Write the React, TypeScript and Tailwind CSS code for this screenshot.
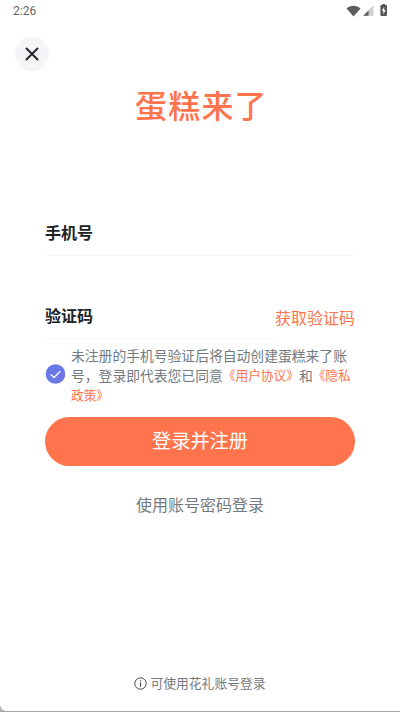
import React from "react";

function StatusBar() {
  return (
    <header className="flex h-6 items-start justify-between pl-[13px] pr-3 font-[Roboto,sans-serif] text-[#626262]">
      <span className="pt-[3px] text-[12px] leading-[17px]">2:26</span>
      <div className="flex items-start pt-[4px]">
        <svg className="mt-px h-3 w-[15px]" viewBox="0 0 15 12" fill="#5c5c5c">
          <path d="M0.5 3.4C4.5 -0.3 10.5 -0.3 14.5 3.4L7.5 11.6Z" />
        </svg>
        <svg className="ml-[2px] mt-px h-[11px] w-[11px]" viewBox="0 0 11 11">
          <path d="M10.3 0.5V10.7H0.2Z" fill="#cecece" />
          <path d="M5.5 5.4V10.7H0.2Z" fill="#5c5c5c" />
        </svg>
        <svg className="ml-[6px] h-3 w-[8px]" viewBox="0 0 8 12">
          <path d="M2.4 0H5V1H6.2Q7 1 7 1.8V11.2Q7 12 6.2 12H1.2Q.4 12 .4 11.2V1.8Q.4 1 1.2 1H2.4Z" fill="#555" />
          <path d="M4.2 2.8L1.8 7H3.3V10.2L5.7 5.9H4.2Z" fill="#fff" />
        </svg>
      </div>
    </header>
  );
}

export default function App() {
  return (
    <main className="relative flex h-[712px] w-[400px] flex-col overflow-hidden border-b border-[#a3a3a3] bg-white font-['Noto_Sans_CJK_SC','Noto_Sans',sans-serif] text-[#737a80]">
      <StatusBar />
      <button aria-label="关闭" className="ml-[15px] mt-[13px] flex h-[34px] w-[34px] shrink-0 items-center justify-center rounded-full bg-[#f4f5f7]">
        <svg className="h-[14px] w-[14px]" viewBox="0 0 14 14" fill="none" stroke="#202326" strokeWidth="1.9" strokeLinecap="round">
          <path d="M1.5 1.5L12.5 12.5M12.5 1.5L1.5 12.5" />
        </svg>
      </button>
      <h1 className="mt-[13px] h-[40px] whitespace-nowrap pl-[135px] text-[32px] font-medium leading-[40px] tracking-[1.2px] text-[#ff744c]">蛋糕来了</h1>

      <section className="mx-[45px] mt-[96px] flex flex-col">
        <div className="h-[36px] border-b border-[#f4f4f4] text-[16px] font-bold leading-[24px] text-[#202326]">手机号</div>
        <div className="mt-[47px] flex h-[36px] justify-between">
          <div className="flex-1 border-b border-[#f4f4f4] text-[16px] font-bold leading-[24px] text-[#202326]">验证码</div>
          <button className="h-[28px] w-[80px] whitespace-nowrap text-[16px] leading-[28px] text-[#ff744c]">获取验证码</button>
        </div>

        <div className="mt-[6px] flex h-[60px] items-start">
          <svg className="mt-[19px] h-5 w-5 shrink-0" viewBox="0 0 20 20">
            <circle cx="10.5" cy="10" r="9.8" fill="#6b78e8" />
            <path d="M5.7 10.4L9 13.5L15.3 7.2" fill="none" stroke="#fff" strokeWidth="1.3" />
          </svg>
          <div className="ml-[6px] whitespace-nowrap text-[13.8px] leading-[20px]">
            <div>未注册的手机号验证后将自动创建蛋糕来了账</div>
            <div className="flex">
              <span>号，登录即代表您已同意</span>
              <span className="text-[12.7px] text-[#ff744c]">《用户协议》</span>
              <span>和</span>
              <span className="text-[12.7px] text-[#ff744c]">《隐私</span>
            </div>
            <div className="text-[12.7px] text-[#ff744c]">政策》</div>
          </div>
        </div>

        <button className="mt-[12px] h-[49px] rounded-full bg-[#ff744c] pb-[2px] text-[19.2px] leading-[45px] text-white">登录并注册</button>
        <button className="mt-[26px] h-6 text-[16px] leading-6">使用账号密码登录</button>
      </section>

      <footer className="mb-[18px] mt-auto flex h-5 items-center justify-center gap-[3px] whitespace-nowrap text-[12.8px] leading-5">
        <svg className="h-[13px] w-[13px]" viewBox="0 0 13 13" fill="none" stroke="#444" strokeWidth="1">
          <circle cx="6.5" cy="6.5" r="5.7" />
          <path d="M6.5 5.6V9.8M6.5 3.2V4.5" strokeWidth="1.2" />
        </svg>
        <span>可使用花礼账号登录</span>
      </footer>
      <svg className="absolute bottom-0 left-0 h-[6px] w-[6px]" viewBox="0 0 6 6">
        <path d="M0 0Q1 5 6 6H0Z" fill="#b5b5b5" />
      </svg>
    </main>
  );
}
